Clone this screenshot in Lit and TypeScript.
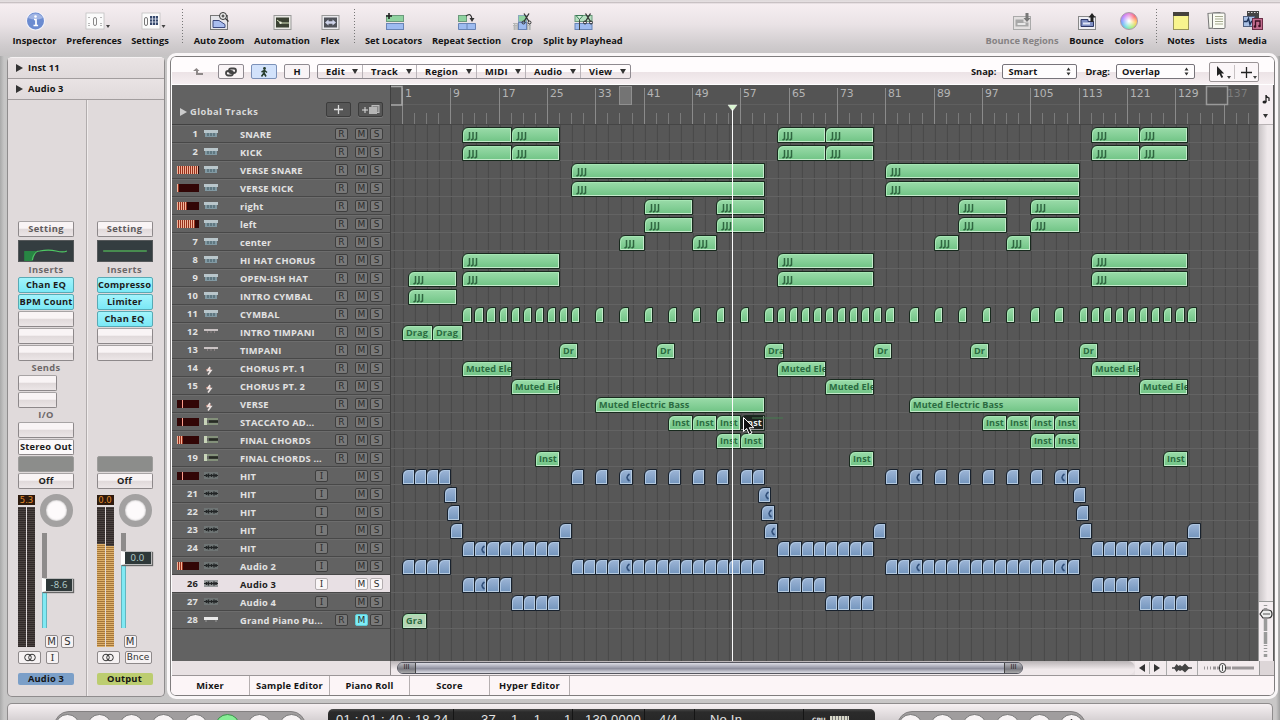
import { LitElement, html, svg, css, nothing } from "lit";
import { customElement } from "lit/decorators.js";
import { classMap } from "lit/directives/class-map.js";

// One unit is two bars of the arrangement.
const UNIT = 12.085;
const ORIGIN = 11.9;

type Region = { s: number; l: number; k: string; t?: string };
type Track = { n: string; name: string; icon: string; m?: number; audio?: boolean; sel?: boolean; muted?: boolean; r: Region[] };

const range = (a: number, b: number) => Array.from({ length: b - a + 1 }, (_, i) => a + i);
const drum = (...p: [number, number][]): Region[] => p.map(([a, b]) => ({ s: a, l: b - a, k: "midi notes", t: "" }));
const named = (t: string, ...p: [number, number][]): Region[] => p.map(([a, b]) => ({ s: a, l: b - a, k: "midi", t }));
const audio = (list: number[], loops: number[] = []): Region[] =>
  list.map((s) => ({ s, l: 1, k: loops.includes(s) ? "audio loop" : "audio" }));

const hits = drum([5, 9], [9, 13], [31, 35], [35, 39], [57, 61], [61, 65]);
const verse = drum([14, 30], [40, 56]);
const sides = drum([20, 24], [26, 30], [46, 50], [52, 56]);
const hats = drum([5, 13], [31, 39], [57, 65]);
const intro = drum([0.5, 4.5]);
const cymbals = [...range(5, 14), 16, 18, 20, 22, 24, 26, 28, ...range(30, 40), 42, 44, 46, 48, 50, 52, 54, ...range(56, 65)];
const timpani: [number, string][] = [[13, "Dr"], [21, "Dr"], [30, "Dra"], [39, "Dr"], [47, "Dr"], [56, "Dr"]];

const TRACKS: Track[] = [
  { n: "1", name: "SNARE", icon: "keys", r: hits },
  { n: "2", name: "KICK", icon: "keys", r: hits },
  { n: "3", name: "VERSE SNARE", icon: "keys", m: 21, r: verse },
  { n: "4", name: "VERSE KICK", icon: "keys", m: 2, r: verse },
  { n: "5", name: "right", icon: "keys", m: 10, r: sides },
  { n: "6", name: "left", icon: "keys", m: 18, r: sides },
  { n: "7", name: "center", icon: "keys", r: drum([18, 20], [24, 26], [44, 46], [50, 52]) },
  { n: "8", name: "HI HAT CHORUS", icon: "keys", r: hats },
  { n: "9", name: "OPEN-ISH HAT", icon: "keys", r: [...intro, ...hats] },
  { n: "10", name: "INTRO CYMBAL", icon: "keys", r: intro },
  { n: "11", name: "CYMBAL", icon: "keys", r: cymbals.map((s) => ({ s, l: 0.68, k: "midi" })) },
  { n: "12", name: "INTRO TIMPANI", icon: "timp", r: named("Drag", [0, 2.5], [2.5, 5]) },
  { n: "13", name: "TIMPANI", icon: "timp", r: timpani.map(([s, t]) => ({ s, l: 1.5, k: "midi", t })) },
  { n: "14", name: "CHORUS PT. 1", icon: "bass", r: named("Muted Ele", [5, 9], [31, 35], [57, 61]) },
  { n: "15", name: "CHORUS PT. 2", icon: "bass", r: named("Muted Ele", [9, 13], [35, 39], [61, 65]) },
  { n: "16", name: "VERSE", icon: "bass", m: -5, r: named("Muted Electric Bass", [16, 30], [42, 56]) },
  {
    n: "17", name: "STACCATO AD...", icon: "strings", m: -5,
    r: [...named("Inst", [22, 24], [24, 26], [26, 28]), { s: 28, l: 2, k: "midi picked", t: "Inst" }, ...named("Inst", [48, 50], [50, 52], [52, 54], [54, 56])],
  },
  { n: "18", name: "FINAL CHORDS", icon: "strings", m: 6, r: named("Inst", [26, 28], [28, 30], [52, 54], [54, 56]) },
  { n: "19", name: "FINAL CHORDS ...", icon: "strings", r: named("Inst", [11, 13], [37, 39], [63, 65]) },
  { n: "20", name: "HIT", icon: "wave", m: -5, audio: true, r: audio([0, 1, 2, 3, 14, 16, 18, 20, 22, 24, 26, 28, 29, 40, 42, 44, 46, 48, 50, 52, 54, 55], [18, 42, 54]) },
  { n: "21", name: "HIT", icon: "wave", audio: true, r: audio([3.5, 29.5, 55.5], [29.5]) },
  { n: "22", name: "HIT", icon: "wave", audio: true, r: audio([3.75, 29.75, 55.75], [29.75]) },
  { n: "23", name: "HIT", icon: "wave", audio: true, r: audio([4, 13, 30, 39, 56, 65], [30]) },
  { n: "24", name: "HIT", icon: "wave", audio: true, r: audio([...range(5, 12), ...range(31, 38), ...range(57, 64)], [6]) },
  { n: "25", name: "Audio 2", icon: "wave", m: 6, audio: true, r: audio([...range(0, 3), ...range(14, 29), ...range(40, 55)], [18, 42, 54]) },
  { n: "26", name: "Audio 3", icon: "wave", audio: true, sel: true, r: audio([...range(5, 8), ...range(31, 34), ...range(57, 60)], [6]) },
  { n: "27", name: "Audio 4", icon: "wave", audio: true, r: audio([...range(9, 12), ...range(35, 38), ...range(61, 64)]) },
  { n: "28", name: "Grand Piano Pu...", icon: "piano", muted: true, r: [{ s: 0, l: 2, k: "midi pale", t: "Gra" }] },
];

const trackIcon: Record<string, unknown> = {
  keys: svg`<rect x="0" y="3" width="14" height="3" fill="#b9c6cb"/><rect x="1" y="6" width="12" height="4" fill="#8199a3"/><path d="M4 6v3M7 6v3M10 6v3" stroke="#4a626b" stroke-width="1.200"/>`,
  timp: svg`<rect x="0" y="4" width="14" height="2" fill="#c9c2c3"/><path d="M3.500 6v2M7 6v2M10.500 6v2" stroke="#8a8182"/>`,
  bass: svg`<path d="M2.500 9.500l4-2" stroke="#d89a8c" stroke-width="2.500"/><path d="M6 6L4 9.500l3 0-3 4" stroke="#ece4e2" stroke-width="1.600" fill="none"/>`,
  strings: svg`<path d="M0 4h14M0 9h14" stroke="#8fa083" stroke-width="1.500"/><path d="M1.500 3v7" stroke="#c7d3b8" stroke-width="3"/><path d="M5 6.500h9" stroke="#262b22" stroke-width="2.500"/>`,
  wave: svg`<rect x="0" y="3" width="14" height="7" fill="#747c7c" opacity=".7"/><path d="M0 6.500h14" stroke="#222526" stroke-width="1"/><path d="M2.500 5v3M4.500 4.500v4M7.500 5v3M10 4.500v4M12 5v3" stroke="#222526" stroke-width="1.500"/>`,
  piano: svg`<rect x="0" y="4" width="14" height="3" fill="#e9e9e9"/><path d="M2 7v2M12 7v2" stroke="#999"/>`,
};

const scissors = svg`<path d="M15.500 2l5 8M20.500 2l-5 8" stroke="#333" stroke-width="1.300"/><circle cx="15" cy="11" r="1.500" fill="none" stroke="#333"/><circle cx="21" cy="11" r="1.500" fill="none" stroke="#333"/>`;
const icons: Record<string, unknown> = {
  info: svg`<circle cx="12.500" cy="11" r="9.500" fill="#f4f4fa"/><circle cx="12.500" cy="11" r="8.500" fill="#6b8bd0"/><path d="M5 8a8.500 8.500 0 0 1 15 0q-7 3-15 0z" fill="#a0b5e4"/><path d="M11 9.500h2v6M10.500 15.500h4.600" stroke="#fff" stroke-width="1.700" fill="none"/><circle cx="12.500" cy="6.500" r="1.300" fill="#fff"/>`,
  prefs: svg`<rect x="4" y="3" width="18" height="16" fill="#fbfbfb" stroke="#bbb" stroke-width=".7"/><rect x="11.500" y="7.500" width="3" height="8" rx="1.500" fill="none" stroke="#888"/><path d="M7 7v2M7 13v3M19 7v2M19 13v3" stroke="#777" stroke-dasharray="1 1"/><path d="M24 15h4l-2 3z" fill="#444"/>`,
  settings: svg`<rect x="4" y="3" width="18" height="16" fill="#fbfbfb" stroke="#bbb" stroke-width=".7"/><rect x="6.500" y="7.500" width="3" height="8" rx="1.500" fill="none" stroke="#777"/><rect x="12" y="6" width="8" height="9" fill="#35486b"/><path d="M12 9h8M12 12h8M14.500 6v9M17.500 6v9" stroke="#dfe6f2" stroke-width=".8"/><path d="M23.500 15h4l-2 3z" fill="#444"/>`,
  zoom: svg`<rect x="3.500" y="5.500" width="17" height="14" fill="#e5e5ea" stroke="#777"/><path d="M6 10.500h6l6 4v3H6z" fill="#a9bdf0" stroke="#3d4a80"/><circle cx="16" cy="6" r="3.500" fill="#eee" stroke="#333"/><path d="M14.500 6h3M16 4.500v3M18.500 8.500l3 3" stroke="#333" stroke-width="1.200"/>`,
  auto: svg`<rect x="4" y="5.500" width="17" height="14" fill="#e9e9e4" stroke="#999"/><rect x="6" y="7.500" width="13" height="10" fill="#3b4233"/><path d="M7 10l4 3h8" stroke="#d9e6c0" fill="none"/><circle cx="10.500" cy="12.800" r="1.200" fill="#eef3e0"/>`,
  flex: svg`<rect x="4" y="5.500" width="17" height="14" fill="#e9e9ec" stroke="#999"/><rect x="6" y="7.500" width="13" height="10" fill="#50535a"/><path d="M7 12.500l3.500-3v1.700h4V9.500l3.500 3-3.500 3v-1.700h-4v1.700z" fill="#cfd4ea"/>`,
  locators: svg`<rect x="4.500" y="5.500" width="17" height="6" fill="#8fd3a0" stroke="#6b9a7c"/><rect x="4.500" y="13.500" width="17" height="6" fill="#9dbbf0" stroke="#6984b5"/><path d="M7 3v6M4 6h6" stroke="#222" stroke-width="1.600"/>`,
  repeat: svg`<rect x="3.500" y="5.500" width="8" height="6" fill="#8fd3a0" stroke="#6b9a7c"/><path d="M3.500 13.500h17v6h-17zM12 13.500v6" fill="#9dbbf0" stroke="#6984b5"/><path d="M11 6q5-4 6 3" stroke="#333" fill="none" stroke-width="1.300"/><path d="M14.500 8h5l-2.500 4z" fill="#333"/>`,
  crop: svg`<path d="M3 13h18v7H3z" fill="#b5b5b5"/><path d="M3 14.500h18M3 17h18M3 19h18" stroke="#eee" stroke-dasharray="1 1.500"/><rect x="8.500" y="5.500" width="8" height="6" fill="#8fd3a0" stroke="#8ab"/><rect x="8.500" y="12.500" width="8" height="7" fill="#9dbbf0" stroke="#6984b5"/><g transform="translate(-1.500 1.500)">${scissors}</g>`,
  split: svg`<rect x="4" y="5.500" width="17" height="6" fill="#b5dfc0" stroke="#6b9a7c"/><rect x="4" y="13.500" width="17" height="6" fill="#9dbbf0" stroke="#6984b5"/><path d="M5 5.500h7L8.500 9.500z" fill="#d7f2dd" stroke="#3c7a57"/><path d="M8.500 9.500V20" stroke="#444"/><g transform="translate(-1 1.500)">${scissors}</g>`,
  bregions: svg`<rect x="3.500" y="6.500" width="17" height="13" fill="#e3e0e0" stroke="#aaa"/><path d="M5.500 9.500h8v3h5v4h-13z" fill="#a7a7a7"/><path d="M7.500 14h8" stroke="#e8e8e8" stroke-width="2"/><path d="M15.500 3h3v5h2L17 12l-3.500-4h2z" fill="#777"/>`,
  bounce: svg`<rect x="3.500" y="6.500" width="17" height="13" fill="#efeff4" stroke="#888"/><path d="M6 9.500h7v2h5.500v5H6z" fill="#7f8fc4" stroke="#2d3764"/><path d="M8 13.500h7" stroke="#dfe4f5" stroke-width="2"/><path d="M15.500 12h3V7.500h2L17 3 13.500 7.500h2z" fill="#222"/>`,
  notes: svg`<rect x="4.500" y="4.500" width="15" height="15" fill="#f8f48e" stroke="#99955a"/><rect x="4" y="2" width="16" height="4" fill="#45423c"/>`,
  lists: svg`<rect x="3.500" y="3" width="12" height="15" fill="#f3f5ec" stroke="#777" transform="rotate(-4 9 11)"/><rect x="7.500" y="3" width="12.500" height="15.500" rx="1" fill="#fbfcf4" stroke="#777"/><path d="M10 6.500h8M10 9h8M10 11.500h8M10 14h8" stroke="#a5aa8e"/>`,
  media: svg`<rect x="6" y="1" width="12" height="7" fill="#444"/><path d="M7 2.500h10" stroke="#ddd" stroke-dasharray="1.500 1.500"/><rect x="2.500" y="6.500" width="11" height="10" fill="#a9c0e4" stroke="#52617f"/><path d="M3 11.500h3l1.500-3 1.500 6 1.500-3h3" stroke="#1c3157" fill="none" stroke-width="1.400"/><rect x="11.500" y="8.500" width="10" height="11" fill="#c16c8d" stroke="#6e3049"/><path d="M14.500 16v-5h4.500v4.500" stroke="#3b1022" fill="none" stroke-width="1.300"/><circle cx="14" cy="16.500" r="1.300" fill="#3b1022"/><circle cx="18.500" cy="16" r="1.300" fill="#3b1022"/>`,
};

type Tool = [string, string, number];
const LEFT: (Tool | number)[] = [
  ["info", "Inspector", 57], ["prefs", "Preferences", 62], ["settings", "Settings", 50], 14,
  ["zoom", "Auto Zoom", 60], ["auto", "Automation", 66], ["flex", "Flex", 30], 18,
  ["locators", "Set Locators", 61], ["repeat", "Repeat Section", 85], ["crop", "Crop", 26], ["split", "Split by Playhead", 96],
];
const RIGHT: (Tool | number)[] = [
  ["bregions", "Bounce Regions", 80], ["bounce", "Bounce", 49], ["wheel", "Colors", 36], 18,
  ["notes", "Notes", 32], ["lists", "Lists", 39], ["media", "Media", 33],
];

@customElement("app-root")
export class AppRoot extends LitElement {
  static styles = css`
    :host { display: block; width: 1280px; height: 720px; overflow: hidden; font: 700 9.3px/12px "Open Sans", "Noto Sans", sans-serif; color: #141414; letter-spacing: 0; }
    * { box-sizing: border-box; }
    .app { width: 1280px; height: 720px; display: grid; grid-template-rows: 56px 644px 20px; background: linear-gradient(90deg, #a9a9a9 0, #c6c5c5 4px, #c9c7c7 1276px, #9f9f9f 1280px); }
    .toolbar { display: flex; padding: 10px 11px 0 6px; background: linear-gradient(#ded9da 0, #e6e0e2 2px, #b9b2b4 2px, #f6eef1 4px, #eae3e6 24px, #cfcbcd 46px, #c6c3c4 100%); }
    .grow { flex: 1; }
    .tool { display: flex; flex-direction: column; align-items: center; white-space: nowrap; }
    .tool .ico { width: 28px; height: 23px; display: flex; justify-content: center; overflow: visible; }
    .tool svg { overflow: visible; flex: none; }
    .tool .cap { margin-top: 2px; display: flex; justify-content: center; width: 0; }
    .dim { color: #858283; }
    .dots { border-left: 1px dashed #777; height: 36px; width: 0; margin-top: -1px; border-left: 0; width: 1px; background: repeating-linear-gradient(#777 0 1px, transparent 1px 3px); }
    .sep { display: flex; justify-content: center; }
    .wheel { width: 18px; height: 18px; margin-top: 2px; border-radius: 50%; border: 1px solid #a9a; background: radial-gradient(circle, #fff 5%, transparent 65%), conic-gradient(#e889d8, #ff7070, #ffd060, #a8f080, #6fe0d8, #78a8ff, #c080ff, #e889d8); }

    .middle { display: flex; }
    .strip { width: 158px; height: 640px; margin: 1px 5px 0 7px; background: #e0dadb; border: 1px solid #8f8c8d; border-top-color: #f6f2f3; border-radius: 5px; display: flex; flex-direction: column; }
    .fold { height: 21px; border-bottom: 1px solid #a29d9e; display: flex; align-items: center; padding-left: 7px; gap: 5px; background: linear-gradient(#e9e3e4, #e0dadb); letter-spacing: .1px; }
    .chans { flex: 1; display: flex; }
    .chan { width: 78px; padding: 121px 0 0 10px; display: flex; flex-direction: column; align-items: flex-start; }
    .chan + .chan { border-left: 1px solid #b1acad; box-shadow: inset 1px 0 #f0ecec; width: 79px; padding-left: 10px; }
    .slot { width: 56px; height: 16px; margin-bottom: 1px; border: 1px solid #8d888a; border-top-color: #a7a3a4; border-radius: 2px; background: linear-gradient(#f9f4f5 0 45%, #e0d9da 50%, #ece6e7); display: flex; align-items: center; justify-content: center; white-space: nowrap; overflow: hidden; color: #1c1c1c; letter-spacing: .2px; }
    .slot.on { background: linear-gradient(#a2f4fc, #7ae8f6); border-color: #58a9b4; }
    .slot.grayt { color: #605b5c; margin-bottom: 3px; letter-spacing: .4px; }
    .slot.half { width: 39px; }
    .slot.white { background: #fcf9fa; }
    .slot.lcd { background: #8c8d8b; border-color: #9d9c9b; }
    .hd { height: 13px; width: 56px; text-align: center; color: #6c6768; line-height: 11px; letter-spacing: .4px; }
    .hd.first { height: 15px; line-height: 15px; }
    .blank { height: 94px; }
    .eq { width: 56px; height: 22px; background: #343d40; border: 1px solid #55585a; }
    .chan svg { display: block; }
    .fader { display: flex; gap: 7px; margin-top: 5px; height: 155px; width: 58px; }
    .meters { width: 17px; }
    .peak { height: 10px; background: #2d1a0e; color: #e08a2c; font: 8.500px/10px "DejaVu Sans", sans-serif; text-align: center; letter-spacing: 0; }
    .bars { display: flex; gap: 1px; margin-top: 2px; height: 140px; }
    .bar { flex: 1; background: repeating-linear-gradient(#4b4341 0 1px, #322b2a 1px 2px); display: flex; align-items: flex-end; }
    .lvl { width: 100%; background: repeating-linear-gradient(#ddb06a 0 1px, #a5763a 1px 2px); }
    .side { flex: 1; display: flex; flex-direction: column; position: relative; }
    .knob { width: 33px; height: 33px; margin-left: -2px; margin-top: -1px; border-radius: 50%; border: 6px solid #a3a1a1; background: #fdfafb; box-shadow: inset 0 0 2px #999; flex: none; }
    .groove { width: 5px; height: 95px; margin-top: 6px; background: #8e8b8b; display: flex; align-items: flex-end; }
    .fill { width: 100%; background: #81e9f3; border: 1px solid #62b6c0; border-width: 0 1px; }
    .thumb { position: absolute; left: 0; width: 31px; height: 14px; border: 1px solid #bbb; border-left: 4px solid #fff; background: #2e3839; color: #b6d0cd; font: 9.500px/12px "Open Sans", sans-serif; text-align: center; box-shadow: 1px 1px 1px #666; letter-spacing: .2px; }
    .btns { display: flex; gap: 3px; height: 13px; margin-bottom: 3px; }
    .b { height: 13px; width: 13px; border: 1px solid #8e898a; border-radius: 2px; background: #f6f2f3; font: 10px/11px "DejaVu Sans", sans-serif; text-align: center; color: #333; letter-spacing: 0; }
    .btns .b.wide { width: 23px; margin-right: 2px; display: flex; align-items: center; justify-content: center; }
    .btns .b.bn { width: 27px; font-size: 9px; }
    .push { margin-left: 27px; margin-top: -15px; }
    .tag { width: 56px; height: 12px; margin-top: 6px; border-radius: 2px; background: #7b9fc8; text-align: center; line-height: 12px; letter-spacing: .2px; }
    .tag.out { background: #bccd70; }

    .main { width: 1105px; height: 640px; border: 1px solid #807d7e; border-radius: 6px; outline: 3px solid #faf7f8; outline-offset: 0; background: #fff; display: flex; flex-direction: column; overflow: hidden; padding-left: 1px; }
    .bar1 { height: 28px; flex: none; display: flex; align-items: center; padding: 2px 0 0 13px; background: linear-gradient(#fffcfd 0 55%, #ece3e6 57%, #f6eff1 100%); border-bottom: 1px solid #fff; }
    .pb { height: 15px; width: 26px; border: 1px solid #8f8a90; border-radius: 2px; display: flex; align-items: center; justify-content: center; margin-right: 7px; background: #f9f4f6; }
    .pb.flat { border-color: transparent; background: none; }
    .pb.blue { background: #d2e2fb; border-color: #7c91b8; }
    .menus { display: flex; height: 15px; border: 1px solid #8f8a90; border-radius: 2px; letter-spacing: .25px; }
    .menu { display: flex; align-items: center; justify-content: space-between; padding: 0 4px 0 8px; border-right: 1px solid #b9b3b8; }
    .menu:last-child { border: 0; }
    .lab { margin-right: 6px; }
    .sel { height: 15px; border: 1px solid #77737a; border-radius: 2px; background: #fefcfd; display: flex; align-items: center; justify-content: space-between; padding: 0 5px; letter-spacing: .2px; }
    .tools { margin-left: 14px; width: 50px; height: 20px; display: flex; border: 1px solid #9b9597; border-radius: 2px; background: #fbf6f8; }

    .body { display: flex; height: 576px; flex: none; background: #5a5a5a; }
    .heads { width: 219px; background: #626262; display: flex; flex-direction: column; border-right: 1px solid #3f3f3f; }
    .global { height: 40px; flex: none; border-bottom: 1px solid #414141; display: flex; align-items: center; color: #d9d9d9; padding: 15px 7px 0 8px; gap: 3px; letter-spacing: .45px; }
    .gb { width: 25px; height: 15px; margin-top: -6px; background: #565656; border: 1px solid #3c3c3c; border-radius: 2px; box-shadow: 0 1px #777; display: flex; align-items: center; justify-content: center; margin-left: 4px; }
    .trk { height: 18px; display: grid; grid-template-columns: 28px 40px 75px 20px 20px 15px 14px; padding-left: 0; border-bottom: 1px solid #484848; box-shadow: inset 0 1px #6d6d6d; color: #e2e2e2; align-items: center; white-space: nowrap; letter-spacing: .2px; }
    .trk.on { background: #e8e0e4; color: #222; box-shadow: none; }
    .num { text-align: right; padding-right: 2px; }
    .vu { margin-left: 5px; width: 22px; height: 8px; background: #320606; overflow: hidden; }
    .led { height: 8px; background: repeating-linear-gradient(90deg, #f3b49a 0 1px, #98301c 1px 2px); }
    .tick { height: 8px; width: 1px; margin-left: 5px; background: #ff9d8c; }
    .ticon { padding-left: 4px; height: 14px; }
    .name { width: 90px; padding-top: 2px; }
    .k { width: 13px; height: 12px; border: 1px solid #3e3e3e; border-radius: 2px; background: #797979; color: #2c2c2c; font: 9px/10px "DejaVu Sans", sans-serif; text-align: center; letter-spacing: 0; margin-top: 0; }
    .i { font-family: "DejaVu Serif", serif; }
    .on .k { background: #faf6f7; border-color: #b3adaf; }
    .k.cy { background: #7fecf6; border-color: #5ecbd6; }

    .arr { width: 867px; position: relative; overflow: hidden; background: #575757; }
    .ruler { height: 40px; display: block; }
    .lanes { height: 536px; position: relative; background-image: repeating-linear-gradient(90deg, #484848 0 1px, transparent 1px 12.085px); background-position: 11.9px 0; }
    .lane { height: 18px; border-bottom: 1px solid #636363; position: relative; }
    .rg { position: absolute; top: 2px; height: 16px; border: 1px solid #182a1e; border-radius: 6px 0 0 0; overflow: hidden; white-space: nowrap; padding-left: 3px; font: 700 9.1px/14px "Open Sans", "Noto Sans", sans-serif; color: #2b6b41; letter-spacing: .1px; background: linear-gradient(#9adba9, #70c485); box-shadow: inset 1px 1px #a6e6b4, inset -1px -1px #c4e9cb; }
    .audio { border-color: #18222e; background: linear-gradient(#9db5d6, #7395bd); box-shadow: inset 1px 1px #adc5e0, inset -1px -1px #b6cade; padding-left: 7px; }
    .pale { background: #b5d5b5; }
    .picked { background: #1c211d; color: #e7ece8; box-shadow: inset -1px -1px #999; }
    .rg svg { display: block; }
    .line { position: absolute; left: 341px; top: 24px; width: 1px; height: 552px; background: #fdfdfd; }
    .over { position: absolute; left: 0; top: 0; }
    .vbar { width: 15px; flex: none; border-left: 1px solid #999; background: linear-gradient(90deg, #c9c4c6, #efe9eb 60%); display: flex; flex-direction: column; }
    .vtop { height: 40px; background: #f5eef1; border-bottom: 1px solid #b9b3b5; }
    .vgrow { flex: 1; }
    .vz { height: 60px; background: #f4edf0; border-top: 1px solid #999; }

    .scroll { height: 15px; flex: none; display: flex; background: #e8e1e3; border-bottom: 1px solid #9b9698; }
    .track0 { width: 219px; border-right: 1px solid #8d8789; }
    .hs { width: 744px; padding: 1px 0 0 6px; background: linear-gradient(#b8b3b5, #f0e9eb 60%); border-radius: 0 7px 7px 0; }
    .ht { width: 626px; height: 12px; border-radius: 6px; border: 1px solid #55565f; background: linear-gradient(#dcdce4, #a4a5b3 40%, #8e8f9e 55%, #dedee6); display: flex; justify-content: space-between; }
    .grip { width: 18px; background: linear-gradient(#b7b7bd, #77777e 60%, #aaa); border-right: 1px solid #444; border-radius: 6px 0 0 6px; text-align: center; font: 7px/9px "DejaVu Sans", sans-serif; color: #222; letter-spacing: 0; }
    .grip:last-child { border-right: 0; border-left: 1px solid #444; border-radius: 0 6px 6px 0; }
    .hz { width: 124px; background: #f2ebed; }
    .corner { flex: 1; background: #ddd6d8; border-left: 1px solid #999; }
    .tabs { flex: 1; display: flex; background: #fcf5f7; margin-left: -1px; letter-spacing: .2px; }
    .tab { width: 80px; border-right: 1px solid #b5afb0; text-align: center; line-height: 19px; }
    .tab:first-child { width: 79px; }

    .foot { margin: 3px 7px 0; background: linear-gradient(#f6f0f2, #d6d1d3); border: 1px solid #8f8c8d; border-bottom: 0; border-radius: 5px 5px 0 0; display: flex; height: 17px; align-items: flex-start; }
    .caps { display: flex; background: #a09d9e; border: 1px solid #838081; height: 30px; border-radius: 15px; margin-top: 7px; padding: 2px 1px 0 0; flex: none; justify-content: space-between; }
    .c { width: 25px; height: 25px; border-radius: 50%; background: #f7f3f4; border: 1px solid #777; flex: none; }
    .c.green { background: #86ee95; border-color: #3c8f4d; }
    .c svg { display: block; }
    .lcdp { margin-left: 22px; width: 547px; height: 20px; margin-top: 5px; border-radius: 5px 5px 0 0; background: linear-gradient(#4a4a4a 0, #2b2b2b 3px, #242424); color: #e4e4e4; font: 13px/15px "Liberation Sans", sans-serif; display: grid; grid-template-columns: 126px 119px 72px 50px 109px 71px; letter-spacing: .2px; flex: none; white-space: pre; }
    .cell { border-right: 1px solid #151515; padding: 3px 0 0 8px; }
    .cell:last-child { border: 0; }
    .cell.r { padding-left: 27px; }
    .cell.m { padding-left: 12px; }
    .cell.cpu { font: 700 6px/8px "DejaVu Sans", sans-serif; padding-top: 7px; display: flex; gap: 4px; letter-spacing: 0; }
    .cpum { width: 19px; height: 8px; background: repeating-linear-gradient(90deg, #d8d8c8 0 2px, #777 2px 3px); }
  `;

  tool(t: Tool | number) {
    if (typeof t === "number") return html`<div class="sep" style="width:${t}px"><div class="dots"></div></div>`;
    const [id, label, w] = t;
    return html`<div class=${classMap({ tool: true, dim: id === "bregions" })} style="width:${w}px">
      <div class="ico">${id === "wheel" ? html`<div class="wheel"></div>` : html`<svg width="24" height="24">${icons[id]}</svg>`}</div>
      <div class="cap">${label}</div>
    </div>`;
  }

  channel(out: boolean) {
    const slot = (t = "", c = "") => html`<div class="slot ${c}">${t}</div>`;
    const level = out ? [103, 101] : [0, 0];
    return html`<div class="chan">
      ${slot("Setting", "grayt")}
      <svg class="eq" viewBox="0 0 56 22">${out
        ? svg`<path d="M4 11h48" stroke="#4ea655" stroke-width="1.500"/>`
        : svg`<path d="M4 11h14q-4 2-5 11H4z" fill="#278543"/><path d="M13 21q2-10 8-10 10-2 18 0t12 0" stroke="#4ec763" fill="none" stroke-width="1.300"/>`}</svg>
      <div class="hd first">Inserts</div>
      ${out ? html`${slot("Compresso", "on")}${slot("Limiter", "on")}${slot("Chan EQ", "on")}${slot()}${slot()}<div class="blank"></div>`
        : html`${slot("Chan EQ", "on")}${slot("BPM Count", "on")}${slot()}${slot()}${slot()}
          <div class="hd">Sends</div>${slot("", "half")}${slot("", "half")}
          <div class="hd">I/O</div>${slot()}${slot("Stereo Out", "white")}`}
      ${slot("", "lcd")}${slot("Off")}
      <div class="fader">
        <div class="meters">
          <div class="peak">${out ? "0.0" : "5.3"}</div>
          <div class="bars">${level.map((h) => html`<div class="bar"><div class="lvl" style="height:${h}px"></div></div>`)}</div>
        </div>
        <div class="side">
          <div class="knob"></div>
          <div class="groove"><div class="fill" style="height:${out ? 70 : 45}px"></div></div>
          <div class="thumb" style="top:${out ? 56 : 83}px">${out ? "0.0" : "-8.6"}</div>
        </div>
      </div>
      <div class="btns push"><div class="b">M</div>${out ? nothing : html`<div class="b">S</div>`}</div>
      <div class="btns"><div class="b wide"><svg width="14" height="9"><circle cx="5" cy="4.500" r="3.300" fill="none" stroke="#333"/><circle cx="9" cy="4.500" r="3.300" fill="none" stroke="#333"/></svg></div>
        <div class="b ${out ? "bn" : "i"}">${out ? "Bnce" : "I"}</div></div>
      <div class="tag ${out ? "out" : ""}">${out ? "Output" : "Audio 3"}</div>
    </div>`;
  }

  head(t: Track) {
    const m = t.m;
    return html`<div class=${classMap({ trk: true, on: !!t.sel })}>
      ${m === undefined ? html`<div class="num">${t.n}</div>`
        : html`<div class="vu">${m < 0 ? html`<div class="tick"></div>` : html`<div class="led" style="width:${m}px"></div>`}</div>`}
      <div class="ticon"><svg width="16" height="14">${trackIcon[t.icon]}</svg></div>
      <div class="name">${t.name}</div>
      <div>${t.audio ? html`<div class="k i">I</div>` : nothing}</div>
      <div>${t.audio ? nothing : html`<div class="k">R</div>`}</div>
      <div class=${classMap({ k: true, cy: !!t.muted })}>M</div>
      <div class="k">S</div>
    </div>`;
  }

  region(r: Region) {
    const left = Math.round(ORIGIN + r.s * UNIT) - 1;
    const right = Math.round(ORIGIN + (r.s + r.l) * UNIT);
    return html`<div class="rg ${r.k}" style="left:${left}px;width:${right - left}px">${
      r.k === "midi notes" ? html`<svg width="13" height="14"><path d="M3.500 4v7l-2 1M7 4v7l-2 1M10.500 4v7l-2 1" stroke="#2f6640" stroke-width="1.500" fill="none"/></svg>`
      : r.k === "audio loop" ? html`<svg width="5" height="14" style="margin-left:-2px"><path d="M4.500 4q-5 3.500 0 7" stroke="#34527c" stroke-width="1.700" fill="none"/></svg>`
      : r.t ?? ""}</div>`;
  }

  ruler() {
    return html`<svg class="ruler" width="867" height="40">
      <rect width="867" height="40" fill="#545454"/>
      <path d="M0 19.500h867" stroke="#5f5f5f"/>
      ${range(0, 70).map((i) => {
        const x = Math.round(ORIGIN + i * UNIT) - 0.5;
        const major = i % 4 === 0;
        return svg`<path d="M${x} ${major ? 3 : 28}V39" stroke=${major ? "#8b8b8b" : "#7a7a7a"}/>
          ${major ? svg`<text x=${x + 2.5} y="12" font-family="DejaVu Sans" font-size="10.800" letter-spacing="0" font-weight="400" fill=${i > 66 ? "#7c7c7c" : "#b4b4b4"}>${i * 2 + 1}</text>` : nothing}`;
      })}
      <path d="M0 1.500h11v18.500H0" fill="none" stroke="#a8a8a8" stroke-width="1.500"/>
      <rect x="228.500" y="1.500" width="12" height="18" fill="#747474" stroke="#909090"/>
      <rect x="815.500" y="1.500" width="21" height="18" fill="#525252" stroke="#9a9a9a" stroke-width="1.500"/>
      <path d="M0 39.500h867" stroke="#454545"/>
      <path d="M337 20h9l-4.500 6z" fill="#d8f5cf" stroke="#eee" stroke-width=".5"/>
    </svg>`;
  }

  render() {
    const tri = html`<svg width="8" height="8"><path d="M1 0l7 4-7 4z" fill="#333"/></svg>`;
    const menus: [string, number][] = [["Edit", 45], ["Track", 54], ["Region", 60], ["MIDI", 49], ["Audio", 55], ["View", 49]];
    const spin = html`<svg width="5" height="9"><path d="M.5 3.500L2.500.500l2 3zM.5 5.500l2 3 2-3z" fill="#333"/></svg>`;
    return html`<div class="app">
      <div class="toolbar">${LEFT.map((t) => this.tool(t))}<div class="grow"></div>${RIGHT.map((t) => this.tool(t))}</div>
      <div class="middle">
        <div class="strip">
          <div class="fold">${tri}Inst 11</div>
          <div class="fold">${tri}Audio 3</div>
          <div class="chans">${this.channel(false)}${this.channel(true)}</div>
        </div>
        <div class="main">
          <div class="bar1">
            <div class="pb flat"><svg width="10" height="8"><path d="M3 7V3h-3l3.500-3 3 3H5v2h5v2z" fill="#8d8888"/></svg></div>
            <div class="pb"><svg width="12" height="10" fill="none" stroke="#444" stroke-width="1.800"><rect x="1" y="4" width="7" height="4.500" rx="2.200"/><rect x="4" y="1.500" width="7" height="4.500" rx="2.200"/></svg></div>
            <div class="pb blue"><svg width="10" height="10"><circle cx="5.500" cy="1.500" r="1.400" fill="#263d2d"/><path d="M5.500 3L5 6l2 3.500M5 6L2.500 9.500M2.500 5l3-1.500 2.500 2" stroke="#263d2d" stroke-width="1.600" fill="none"/></svg></div>
            <div class="pb">H</div>
            <div class="menus">${menus.map(([n, w]) => html`<div class="menu" style="width:${w}px">${n}<svg width="6" height="5"><path d="M0 0h6L3 5z" fill="#333"/></svg></div>`)}</div>
            <div class="grow"></div>
            <div class="lab">Snap:</div><div class="sel" style="width:75px">Smart${spin}</div>
            <div class="lab" style="margin-left:8px">Drag:</div><div class="sel" style="width:79px">Overlap${spin}</div>
            <div class="tools" style="margin-right:15px"><svg width="48" height="18"><path d="M7 3v10l2.500-2 2 4 1.700-1-2-3.500h3z" fill="#222"/><path d="M17 13h4l-2 3zM43 13h4l-2 3z" fill="#444"/><path d="M24.500 2v14" stroke="#c7c1c3"/><path d="M36.500 4v11M31 9.500h11" stroke="#222" stroke-width="1.300"/></svg></div>
          </div>
          <div class="body">
            <div class="heads">
              <div class="global"><svg width="7" height="8"><path d="M0 0l7 4-7 4z" fill="#ccc"/></svg>Global Tracks<div class="grow"></div>
                <div class="gb"><svg width="9" height="9"><path d="M4.500 0v9M0 4.500h9" stroke="#ddd" stroke-width="1.300"/></svg></div>
                <div class="gb"><svg width="19" height="11"><path d="M4 3v6M1 6h6" stroke="#ddd"/><rect x="11" y="1.500" width="7" height="7" fill="#888" stroke="#bbb"/><rect x="8" y="3" width="8" height="7" fill="#b5b5b5"/></svg></div>
              </div>
              ${TRACKS.map((t) => this.head(t))}
            </div>
            <div class="arr">
              ${this.ruler()}
              <div class="lanes">${TRACKS.map((t) => html`<div class="lane">${t.r.map((r) => this.region(r))}</div>`)}</div>
              <div class="line"></div>
              <svg class="over" width="867" height="576"><path d="M361 333h31" stroke="#467c51"/><path d="M352.500 332.500v14l3.200-3 2.600 5.700 2.600-1.200-2.600-5.300h4.600z" fill="#111" stroke="#fff" stroke-width="1"/></svg>
            </div>
            <div class="vbar">
              <div class="vtop"><svg width="14" height="39"><ellipse cx="5.500" cy="17" rx="2" ry="1.600" fill="#222"/><path d="M7 17v-7q0 2 3 3v3" stroke="#222" fill="none" stroke-width="1.300"/><path d="M4 29h5l-2.500 4z" fill="#333"/></svg></div>
              <div class="vgrow"></div>
              <div class="vz"><svg width="14" height="59"><path d="M6.500 3v52" stroke="#9a9a9a" stroke-width="3.500" stroke-dasharray="1 2 1 2 1 2 4 1 12 1 12 1"/><path d="M1 12l3-4h5q4 0 4 4t-4 4H4z" fill="#eee" stroke="#333" stroke-width="1.200"/><path d="M4 12h7" stroke="#555"/></svg></div>
            </div>
          </div>
          <div class="scroll">
            <div class="track0"></div>
            <div class="hs"><div class="ht"><div class="grip">III</div><div class="grip">III</div></div></div>
            <div class="hz"><svg width="124" height="14"><path d="M10 3v8L4 7zM19 3v8l6-4z" fill="#333"/><path d="M14.500 1v12M31.500 0v14M62.500 0v14" stroke="#aaa"/><path d="M37 7h20" stroke="#444" stroke-width="1.500"/><path d="M39 7l2.500-4 2 2 1.500-1 2 1.500L50 2.500 54.500 7 50 11.500 47 9l-2 1-1.500-1-2 2z" fill="#444"/><path d="M69 7h50" stroke="#9a9698" stroke-width="3" stroke-dasharray="1 2 1 2 1 2 3 1 14 1 30"/><rect x="84.500" y="2.500" width="6" height="9" rx="3" fill="#eee" stroke="#333"/><path d="M87.500 4v6" stroke="#555"/></svg></div>
            <div class="corner"></div>
          </div>
          <div class="tabs">${["Mixer", "Sample Editor", "Piano Roll", "Score", "Hyper Editor"].map((t) => html`<div class="tab">${t}</div>`)}</div>
        </div>
      </div>
      <div class="foot">
        <div class="caps" style="width:252px;margin-left:46px">${range(0, 7).map((i) => html`<div class=${classMap({ c: true, green: i === 5 })}></div>`)}</div>
        <div class="lcdp">
          <div class="cell">01 : 01 : 40 : 18.24</div><div class="cell r">37    1    1      1</div><div class="cell m">130.0000</div><div class="cell" style="padding-left:14px">4/4</div><div class="cell" style="padding-left:15px">No In</div><div class="cell cpu">CPU<div class="cpum"></div></div>
        </div>
        <div class="caps" style="width:189px;margin-left:22px">${range(0, 5).map((i) => html`<div class="c">${i === 0 ? html`<svg width="23" height="10"><path d="M7 9q4.500-6 9 0" fill="none" stroke="#444" stroke-width="2"/></svg>` : i === 5 ? html`<svg width="23" height="10"><path d="M11.500 4v6" stroke="#444" stroke-width="1.500"/></svg>` : nothing}</div>`)}</div>
      </div>
    </div>`;
  }
}
